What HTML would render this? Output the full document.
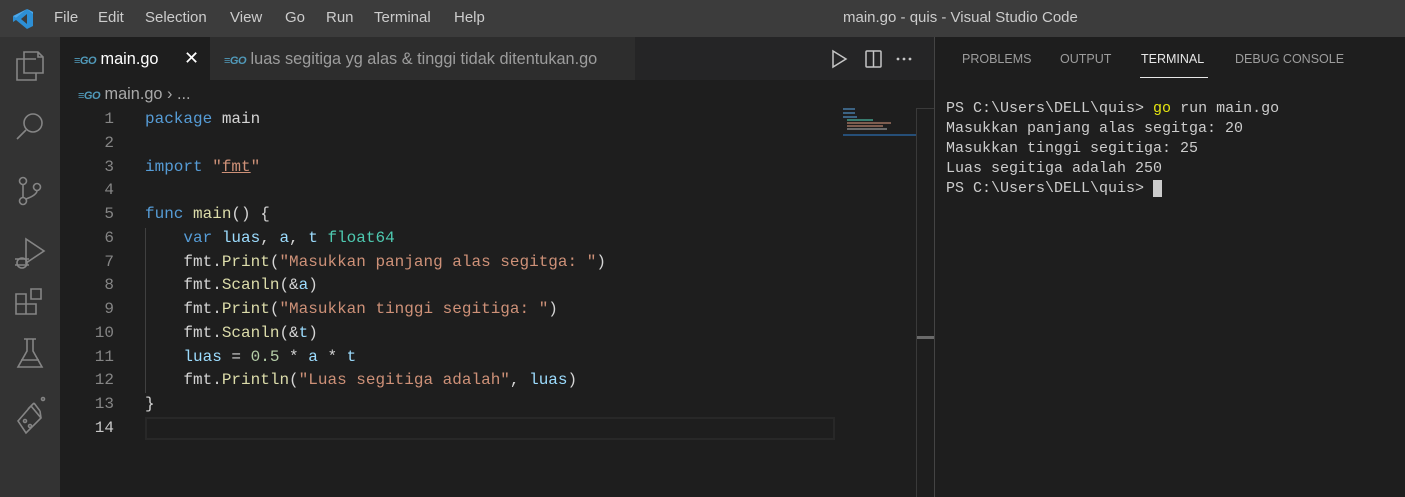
<!DOCTYPE html>
<html><head><meta charset="utf-8"><style>
*{margin:0;padding:0;box-sizing:border-box}
body{width:1405px;height:497px;background:#1e1e1e;overflow:hidden;position:relative;font-family:"Liberation Sans",sans-serif}
.a{position:absolute}
#title{left:0;top:0;width:1405px;height:37px;background:#3c3c3c;color:#cccccc;font-size:15px}
#title span{position:absolute;top:9px}
#act{left:0;top:37px;width:60px;height:460px;background:#333333}
#tabs{left:60px;top:37px;width:875px;height:43px;background:#252526}
.go{color:#519aba;font-weight:bold;font-style:italic;font-size:11px;letter-spacing:-0.5px}
.code{font-family:"Liberation Mono",monospace;font-size:16px;line-height:23.77px;white-space:pre}
.k{color:#569cd6}.v{color:#9cdcfe}.f{color:#dcdcaa}.s{color:#ce9178}.t{color:#4ec9b0}.n{color:#b5cea8}.w{color:#d4d4d4}
.term{font-family:"Liberation Mono",monospace;font-size:15px;line-height:20px;white-space:pre;color:#cccccc}
.ptab{position:absolute;top:52px;font-size:12.5px;color:#9d9d9d}
</style></head><body>
<div id="title" class="a">
<svg class="a" style="left:12px;top:8px" width="22" height="22" viewBox="0 0 22 22"><path d="M15 1 L21 4 V18 L15 21 L4 12 L1 14 V8 L4 10 Z" fill="#2d8fd5"/><path d="M15 6 V16 L9 11 Z" fill="#3c3c3c"/><path d="M1 8 L4 10 L15 1 L21 4 V6 L15 1 Z" fill="#4aa8ec"/></svg>
<span style="left:54px">File</span><span style="left:98px">Edit</span><span style="left:145px">Selection</span><span style="left:230px">View</span><span style="left:285px">Go</span><span style="left:326px">Run</span><span style="left:374px">Terminal</span><span style="left:454px">Help</span>
<span style="left:843px">main.go - quis - Visual Studio Code</span>
</div>
<div id="act" class="a">
<svg class="a" style="left:14px;top:12px" width="32" height="400" viewBox="0 0 32 400" fill="none" stroke="#858585" stroke-width="1.6">
<path d="M3 10 H10 V3 H24 L29 8 V24 H22 V31 H3 Z M10 10 V24 H22 M22 10 H10" /><path d="M24 3 V8 H29"/>
<circle cx="19" cy="74" r="9"/><path d="M12 81 L3 90"/>
<circle cx="9" cy="132" r="3.5"/><circle cx="9" cy="152" r="3.5"/><circle cx="23" cy="138" r="3.5"/><path d="M9 135.5 V148.5 M23 141.5 Q23 146 12 150"/>
<path d="M12 190 V214 L30 202 Z"/><circle cx="8" cy="214" r="5"/><path d="M1 210 H15 M1 216 H15"/>
<path d="M2 255 H12 V265 H2 Z M12 255 H22 V265 H12 Z M2 245 H12 V255 H2 Z M17 240 H27 V250 H17 Z"/>
<path d="M10 290 H22 M13 290 V302 L4 318 H28 L19 302 V290 M7 311 H25"/>
<path d="M4 372 L17 357 L27 369 L12 384 Z M14 360 L20 354 M20 354 L26 362 M26 362 L27 369"/><circle cx="11" cy="372" r="1.5"/><circle cx="16" cy="377" r="1.5"/><circle cx="29" cy="350" r="1.5"/>
</svg>
</div>
<div id="tabs" class="a">
<div class="a" style="left:0;top:0;width:150px;height:43px;background:#1e1e1e"></div>
<div class="a" style="left:150px;top:0;width:425px;height:43px;background:#2d2d2d"></div>
<div class="a" style="left:14px;top:13px;font-size:16.3px;color:#ffffff"><span class="go">≡GO</span> main.go</div>
<div class="a" style="left:124px;top:11px;font-size:18px;color:#ffffff">✕</div>
<div class="a" style="left:164px;top:13px;font-size:16.3px;color:#9d9d9d"><span class="go">≡GO</span> luas segitiga yg alas &amp; tinggi tidak ditentukan.go</div>
<svg class="a" style="left:770px;top:12px" width="90" height="20" viewBox="0 0 90 20" fill="none" stroke="#c5c5c5" stroke-width="1.5"><path d="M3 2 L16 10 L3 18 Z"/><rect x="36" y="2" width="15" height="16" rx="1"/><path d="M43.5 2 V18"/><g fill="#c5c5c5" stroke="none"><circle cx="68" cy="10" r="1.4"/><circle cx="74" cy="10" r="1.4"/><circle cx="80" cy="10" r="1.4"/></g></svg>
</div>
<div class="a" style="left:78px;top:85px;font-size:16.3px;color:#a9a9a9"><span class="go">≡GO</span> main.go › ...</div>
<div class="a code" style="left:64px;top:108px;width:50px;text-align:right;color:#858585">1
2
3
4
5
6
7
8
9
10
11
12
13
<span style="color:#c6c6c6">14</span></div>
<div class="a" style="left:145px;top:417px;width:690px;height:23px;border:2px solid #282828"></div>
<div class="a" style="left:145px;top:228px;width:1px;height:165px;background:#404040"></div>
<div class="a code" style="left:145px;top:108px;color:#d4d4d4"><span class="k">package</span> <span class="w">main</span>

<span class="k">import</span> <span class="s">"<u style="text-decoration-color:#ce9178">fmt</u>"</span>

<span class="k">func</span> <span class="f">main</span>() {
    <span class="k">var</span> <span class="v">luas</span>, <span class="v">a</span>, <span class="v">t</span> <span class="t">float64</span>
    <span class="w">fmt</span>.<span class="f">Print</span>(<span class="s">"Masukkan panjang alas segitga: "</span>)
    <span class="w">fmt</span>.<span class="f">Scanln</span>(&amp;<span class="v">a</span>)
    <span class="w">fmt</span>.<span class="f">Print</span>(<span class="s">"Masukkan tinggi segitiga: "</span>)
    <span class="w">fmt</span>.<span class="f">Scanln</span>(&amp;<span class="v">t</span>)
    <span class="v">luas</span> = <span class="n">0.5</span> * <span class="v">a</span> * <span class="v">t</span>
    <span class="w">fmt</span>.<span class="f">Println</span>(<span class="s">"Luas segitiga adalah"</span>, <span class="v">luas</span>)
}
</div>
<div class="a" style="left:843px;top:108px;width:72px;height:22px;opacity:.55">
<div class="a" style="left:0;top:0;width:12px;height:1.5px;background:#569cd6"></div>
<div class="a" style="left:0;top:4px;width:12px;height:1.5px;background:#569cd6"></div>
<div class="a" style="left:0;top:8px;width:14px;height:1.5px;background:#569cd6"></div>
<div class="a" style="left:4px;top:11px;width:26px;height:1.5px;background:#4ec9b0"></div>
<div class="a" style="left:4px;top:14px;width:44px;height:1.5px;background:#ce9178"></div>
<div class="a" style="left:4px;top:17px;width:36px;height:1.5px;background:#ce9178"></div>
<div class="a" style="left:4px;top:20px;width:40px;height:1.5px;background:#aaa"></div>
</div>
<div class="a" style="left:843px;top:134px;width:73px;height:2px;background:#264f78"></div>
<div class="a" style="left:916px;top:108px;width:1px;height:389px;background:#3a3a3a"></div>
<div class="a" style="left:917px;top:108px;width:17px;height:1px;background:#3a3a3a"></div>
<div class="a" style="left:917px;top:336px;width:17px;height:3px;background:#6a6a6a"></div>
<div class="a" style="left:934px;top:37px;width:1px;height:460px;background:#444"></div>
<div class="ptab" style="left:962px">PROBLEMS</div>
<div class="ptab" style="left:1060px">OUTPUT</div>
<div class="ptab" style="left:1141px;color:#e7e7e7">TERMINAL</div>
<div class="a" style="left:1140px;top:77px;width:68px;height:1px;background:#e7e7e7"></div>
<div class="ptab" style="left:1235px">DEBUG CONSOLE</div>
<div class="a term" style="left:946px;top:99px">PS C:\Users\DELL\quis&gt; <span style="color:#e5e510">go</span> run main.go
Masukkan panjang alas segitga: 20
Masukkan tinggi segitiga: 25
Luas segitiga adalah 250
PS C:\Users\DELL\quis&gt; <span style="background:#cccccc"> </span></div>
</body></html>
